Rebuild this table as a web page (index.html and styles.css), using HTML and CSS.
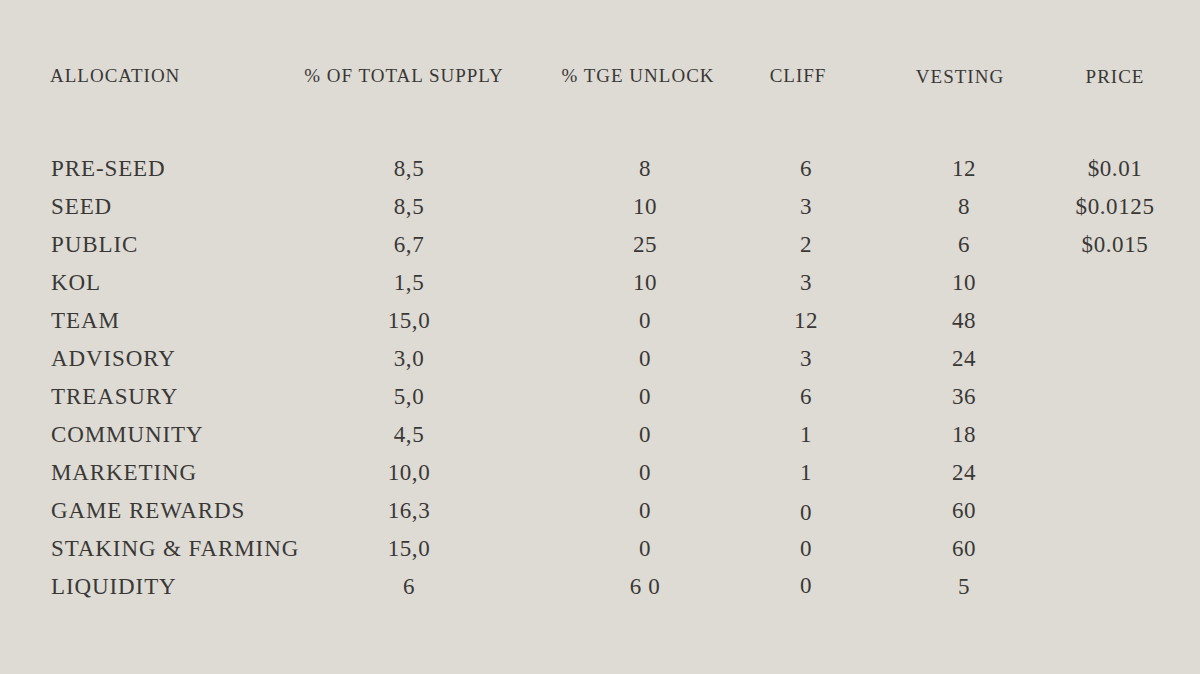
FILE: index.html
```html
<!DOCTYPE html>
<html lang="en">
<head>
<meta charset="utf-8">
<title>Token Allocation</title>
<link rel="stylesheet" href="styles.css">
</head>
<body>
<div class="table">
  <div class="row head">
    <div class="cell first">ALLOCATION</div>
    <div class="cell h2">% OF TOTAL SUPPLY</div>
    <div class="cell h3">% TGE UNLOCK</div>
    <div class="cell h4">CLIFF</div>
    <div class="cell h5">VESTING</div>
    <div class="cell h6">PRICE</div>
  </div>
  <div class="body">
    <div class="row"><div class="cell first">PRE-SEED</div><div class="cell">8,5</div><div class="cell">8</div><div class="cell">6</div><div class="cell">12</div><div class="cell">$0.01</div></div>
    <div class="row"><div class="cell first">SEED</div><div class="cell">8,5</div><div class="cell">10</div><div class="cell">3</div><div class="cell">8</div><div class="cell">$0.0125</div></div>
    <div class="row"><div class="cell first">PUBLIC</div><div class="cell">6,7</div><div class="cell">25</div><div class="cell">2</div><div class="cell">6</div><div class="cell">$0.015</div></div>
    <div class="row"><div class="cell first">KOL</div><div class="cell">1,5</div><div class="cell">10</div><div class="cell">3</div><div class="cell">10</div><div class="cell"></div></div>
    <div class="row"><div class="cell first">TEAM</div><div class="cell">15,0</div><div class="cell">0</div><div class="cell">12</div><div class="cell">48</div><div class="cell"></div></div>
    <div class="row"><div class="cell first">ADVISORY</div><div class="cell">3,0</div><div class="cell">0</div><div class="cell">3</div><div class="cell">24</div><div class="cell"></div></div>
    <div class="row"><div class="cell first">TREASURY</div><div class="cell">5,0</div><div class="cell">0</div><div class="cell">6</div><div class="cell">36</div><div class="cell"></div></div>
    <div class="row"><div class="cell first">COMMUNITY</div><div class="cell">4,5</div><div class="cell">0</div><div class="cell">1</div><div class="cell">18</div><div class="cell"></div></div>
    <div class="row"><div class="cell first">MARKETING</div><div class="cell">10,0</div><div class="cell">0</div><div class="cell">1</div><div class="cell">24</div><div class="cell"></div></div>
    <div class="row"><div class="cell first">GAME REWARDS</div><div class="cell">16,3</div><div class="cell">0</div><div class="cell low">0</div><div class="cell">60</div><div class="cell"></div></div>
    <div class="row"><div class="cell first">STAKING &amp; FARMING</div><div class="cell">15,0</div><div class="cell">0</div><div class="cell">0</div><div class="cell">60</div><div class="cell"></div></div>
    <div class="row"><div class="cell first">LIQUIDITY</div><div class="cell">6</div><div class="cell">6 0</div><div class="cell high">0</div><div class="cell">5</div><div class="cell"></div></div>
  </div>
</div>
</body>
</html>
```

FILE: styles.css
```css
html, body {
  margin: 0;
  padding: 0;
  background: #dedbd5;
}
body {
  width: 1200px;
  height: 674px;
  overflow: hidden;
  font-family: "Liberation Serif", "Times New Roman", serif;
  color: #3a3835;
}
.table {
  padding: 57px 0 0 50px;
}
.row {
  display: grid;
  grid-template-columns: 239px 240px 232px 90px 226px 76px;
  height: 38px;
  align-items: center;
}
.cell {
  display: flex;
  justify-content: center;
  white-space: nowrap;
}
.cell.first {
  justify-content: flex-start;
}
.head {
  font-size: 19px;
  letter-spacing: 1px;
  margin-bottom: 55px;
}
.head .h2 { padding-right: 10px; }
.head .h3 { padding-right: 14px; }
.head .h4 { padding-right: 16px; }
.head .h5 { padding-right: 8px; padding-top: 2px; }
.head .h6 { padding-top: 2px; }
.body .row {
  font-size: 23px;
  letter-spacing: 0.6px;
}
.body .cell.first {
  padding-left: 1px;
  letter-spacing: 0.9px;
}
.low { padding-top: 4px; }
.high { padding-bottom: 2px; }
```
